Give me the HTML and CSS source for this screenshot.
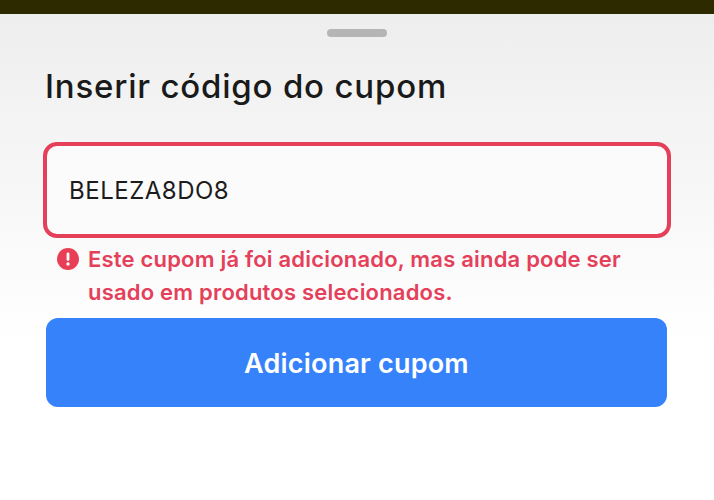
FILE: index.html
```html
<!DOCTYPE html>
<html lang="pt-BR">

<head>
    <meta charset="UTF-8">
    <meta name="viewport" content="width=device-width, initial-scale=1">
    <title>Inserir código do cupom</title>
    <link rel="stylesheet" href="styles.css">
</head>

<body>
    <div class="top-strip"></div>
    <div class="sheet">
        <div class="handle"></div>
        <h1 class="title">Inserir código do cupom</h1>
        <div class="code-box">BELEZA8DO8</div>
        <div class="error-row">
            <svg class="error-icon" viewBox="0 0 22 22" aria-hidden="true">
                <circle cx="11" cy="11" r="11" fill="#e83f56" />
                <rect x="9.6" y="4.6" width="2.8" height="8.4" rx="1.4" fill="#fff" />
                <circle cx="11" cy="16" r="1.7" fill="#fff" />
            </svg>
            <p class="error-text">Este cupom já foi adicionado, mas ainda pode ser usado em produtos selecionados.</p>
        </div>
        <button class="add-btn">Adicionar cupom</button>
    </div>
</body>

</html>
```

FILE: styles.css
```css
body {
    margin: 0;
    font-family: Inter, "Liberation Sans", sans-serif;
    background-color: #fff;
    overflow: hidden;
}

.top-strip {
    height: 14px;
    background-color: #2e2a00;
}

.sheet {
    display: flex;
    flex-direction: column;
    height: 486px;
    box-sizing: border-box;
    padding: 15px 43px 0;
    background: linear-gradient(#eeeeee, #ffffff 330px);
}

.handle {
    align-self: center;
    width: 60px;
    height: 8px;
    border-radius: 4px;
    background-color: #b5b5b5;
}

.title {
    margin: 27px 0 0 2px;
    font-size: 33px;
    line-height: 44px;
    font-weight: 500;
    letter-spacing: 0.8px;
    color: #1a1a1a;
}

.code-box {
    display: flex;
    align-items: center;
    height: 96px;
    margin-top: 34px;
    padding-left: 22px;
    box-sizing: border-box;
    border: 4px solid #e4405a;
    border-radius: 14px;
    background-color: #fbfbfb;
    font-size: 24px;
    letter-spacing: 0.5px;
    color: #1c1c1c;
}

.error-row {
    display: flex;
    align-items: flex-start;
    gap: 9px;
    margin: 5px 0 0 14px;
}

.error-icon {
    flex: none;
    width: 22px;
    height: 22px;
    margin-top: 5px;
}

.error-text {
    margin: 0;
    font-size: 22px;
    line-height: 33px;
    font-weight: 600;
    letter-spacing: 0.2px;
    color: #e4405a;
}

.add-btn {
    height: 89px;
    margin: 9px 4px 0 3px;
    padding-top: 3px;
    border: none;
    border-radius: 12px;
    background-color: #3582fb;
    color: #fff;
    font-family: inherit;
    font-size: 27px;
    font-weight: 600;
    letter-spacing: 0.2px;
}
```
